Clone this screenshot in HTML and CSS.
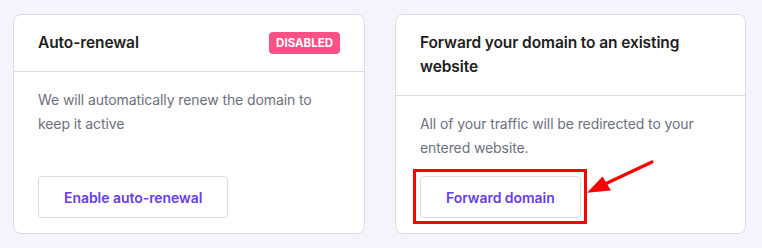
FILE: index.html
```html
<!DOCTYPE html>
<html lang="en">
<head>
<meta charset="utf-8">
<title>Domain settings</title>
<link rel="stylesheet" href="styles.css">
</head>
<body>
<div class="grid">
  <section class="card">
    <header class="card-head">
      <h2 class="card-title">Auto-renewal</h2>
      <span class="badge">DISABLED</span>
    </header>
    <div class="card-body">
      <p class="card-text">We will automatically renew the domain to keep it active</p>
      <button class="btn" type="button">Enable auto-renewal</button>
    </div>
  </section>
  <section class="card card-annotated">
    <header class="card-head">
      <h2 class="card-title">Forward your domain to an existing website</h2>
    </header>
    <div class="card-body">
      <p class="card-text">All of your traffic will be redirected to your entered website.</p>
      <button class="btn btn-highlight" type="button">Forward domain</button>
    </div>
    <svg class="arrow" width="80" height="50" viewBox="0 0 80 50" aria-hidden="true">
      <line x1="71" y1="11" x2="24" y2="33" stroke="#ff0000" stroke-width="3.2" stroke-linecap="round"/>
      <polygon points="6,41.7 21.5,25.5 30,39.5" fill="#ff0000"/>
    </svg>
  </section>
</div>
</body>
</html>
```

FILE: styles.css
```css
* { box-sizing: border-box; }

html, body {
  margin: 0;
  padding: 0;
  background: #f4f4fd;
}

body {
  padding: 14px 16px 0 13px;
  font-family: Inter, "DejaVu Sans", sans-serif;
  -webkit-font-smoothing: antialiased;
}

.grid {
  display: grid;
  grid-template-columns: 352px 351px;
  column-gap: 30px;
  width: 733px;
}

.card {
  background: #ffffff;
  border: 1px solid #dadce3;
  border-radius: 8px;
  display: flex;
  flex-direction: column;
  height: 220px;
}

.card-annotated { position: relative; }

.card-head {
  display: flex;
  align-items: center;
  justify-content: space-between;
  padding: 16px 24px;
  border-bottom: 1px solid #dadce3;
}

.card-title {
  margin: 0;
  font-size: 15.5px;
  line-height: 24px;
  font-weight: 600;
  color: #1d1e20;
  letter-spacing: -0.1px;
}

.badge {
  display: inline-flex;
  align-items: center;
  height: 22px;
  padding: 0 7px;
  border-radius: 4px;
  background: #fc5185;
  color: #ffffff;
  font-size: 11.5px;
  font-weight: 700;
  letter-spacing: 0;
}

.card-body {
  flex: 1;
  display: flex;
  flex-direction: column;
  align-items: flex-start;
  padding: 16px 24px 15px;
}

.card-text {
  margin: 0 0 16px;
  font-size: 14px;
  line-height: 24px;
  color: #6d7081;
  letter-spacing: -0.1px;
}

.btn {
  margin-top: auto;
  height: 42px;
  padding: 0 25px;
  background: #ffffff;
  border: 1px solid #dadce3;
  border-radius: 4px;
  font-family: Inter, "DejaVu Sans", sans-serif;
  font-size: 14px;
  font-weight: 600;
  color: #673de6;
  letter-spacing: -0.05px;
}

.btn-highlight { position: relative; }

.btn-highlight::after {
  content: "";
  position: absolute;
  left: -8px;
  top: -8px;
  right: -7px;
  bottom: -7px;
  border: 3.5px solid #ff0000;
}

.arrow {
  position: absolute;
  left: 185px;
  top: 136px;
}
```
